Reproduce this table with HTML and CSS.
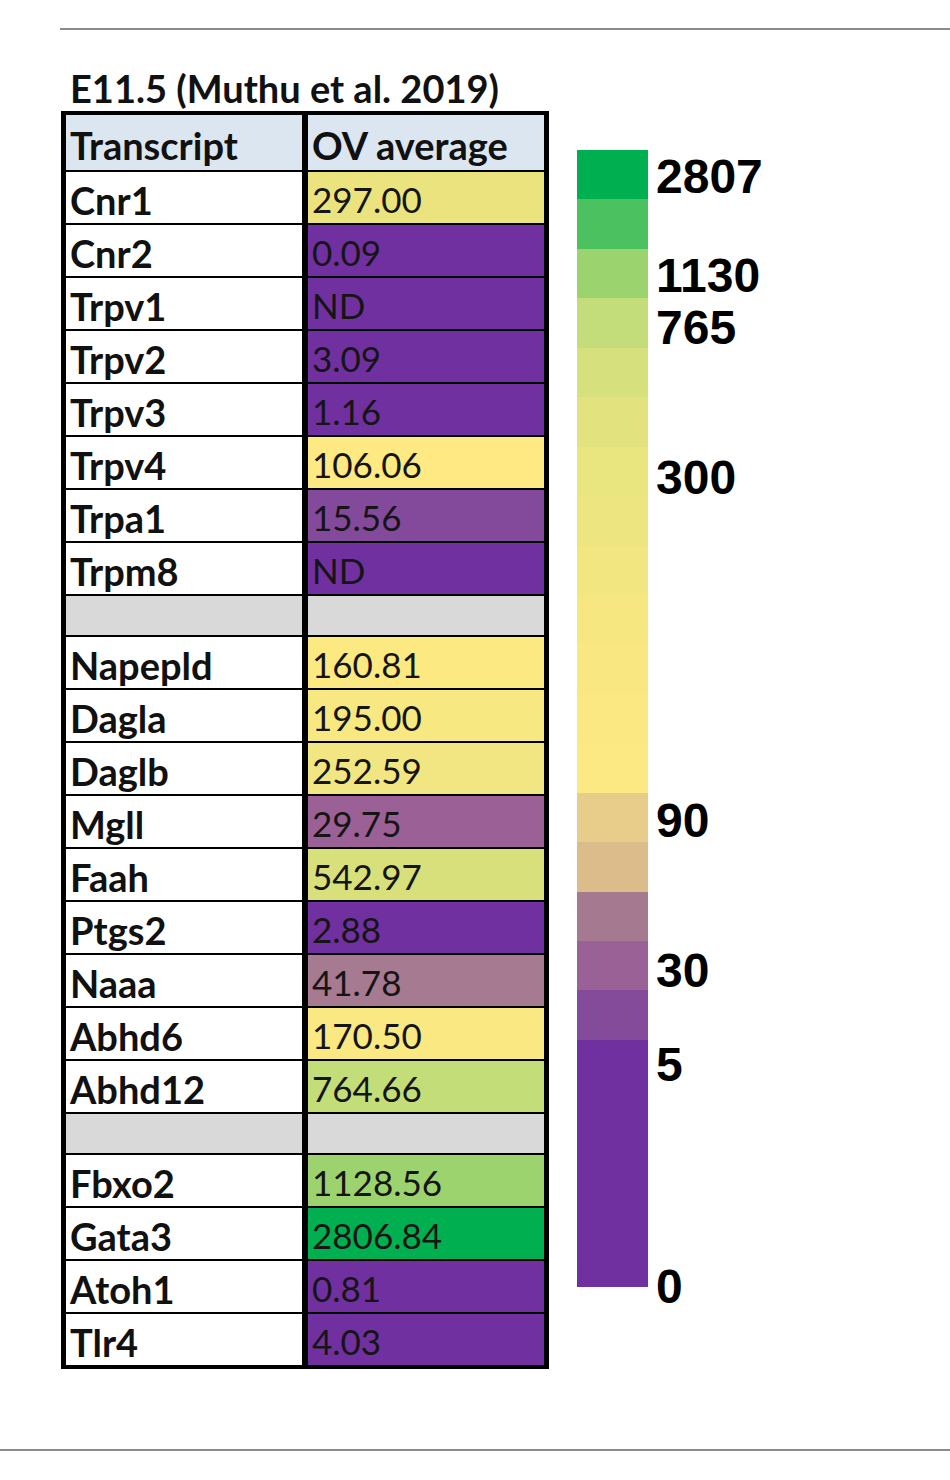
FILE: index.html
```html
<!DOCTYPE html>
<html lang="en">
<head>
<meta charset="utf-8">
<title>E11.5 (Muthu et al. 2019)</title>
<link rel="stylesheet" href="styles.css">
</head>
<body>
<div class="page">
  <div class="rule rule-top"></div>
  <div class="figure">
    <div class="table-block">
      <div class="title">E11.5 (Muthu et al. 2019)</div>
      <div class="grid">
        <div class="cell head">Transcript</div><div class="cell head">OV average</div>
        <div class="cell label">Cnr1</div><div class="cell val" style="background:#ebe47e">297.00</div>
        <div class="cell label">Cnr2</div><div class="cell val" style="background:#7030a0">0.09</div>
        <div class="cell label">Trpv1</div><div class="cell val" style="background:#7030a0">ND</div>
        <div class="cell label">Trpv2</div><div class="cell val" style="background:#7030a0">3.09</div>
        <div class="cell label">Trpv3</div><div class="cell val" style="background:#7030a0">1.16</div>
        <div class="cell label">Trpv4</div><div class="cell val" style="background:#fee983">106.06</div>
        <div class="cell label">Trpa1</div><div class="cell val" style="background:#834a9c">15.56</div>
        <div class="cell label">Trpm8</div><div class="cell val" style="background:#7030a0">ND</div>
        <div class="cell spacer"></div><div class="cell spacer"></div>
        <div class="cell label">Napepld</div><div class="cell val" style="background:#fce982">160.81</div>
        <div class="cell label">Dagla</div><div class="cell val" style="background:#f7e882">195.00</div>
        <div class="cell label">Daglb</div><div class="cell val" style="background:#f1e681">252.59</div>
        <div class="cell label">Mgll</div><div class="cell val" style="background:#9b6197">29.75</div>
        <div class="cell label">Faah</div><div class="cell val" style="background:#d8e07c">542.97</div>
        <div class="cell label">Ptgs2</div><div class="cell val" style="background:#7030a0">2.88</div>
        <div class="cell label">Naaa</div><div class="cell val" style="background:#a67a90">41.78</div>
        <div class="cell label">Abhd6</div><div class="cell val" style="background:#fae882">170.50</div>
        <div class="cell label">Abhd12</div><div class="cell val" style="background:#c3dd79">764.66</div>
        <div class="cell spacer"></div><div class="cell spacer"></div>
        <div class="cell label">Fbxo2</div><div class="cell val" style="background:#9cd36f">1128.56</div>
        <div class="cell label">Gata3</div><div class="cell val" style="background:#00b050">2806.84</div>
        <div class="cell label">Atoh1</div><div class="cell val" style="background:#7030a0">0.81</div>
        <div class="cell label">Tlr4</div><div class="cell val" style="background:#7030a0">4.03</div>
      </div>
    </div>
    <div class="legend">
      <div class="bar">
        <div class="seg" style="background:#00b050"></div>
        <div class="seg" style="background:#4cc160"></div>
        <div class="seg" style="background:#9bd46f"></div>
        <div class="seg" style="background:#c2dd7a"></div>
        <div class="seg" style="background:#d6e07c"></div>
        <div class="seg" style="background:#e2e37f"></div>
        <div class="seg" style="background:#e9e57f"></div>
        <div class="seg" style="background:#ede580"></div>
        <div class="seg" style="background:#f2e681"></div>
        <div class="seg" style="background:#f6e781"></div>
        <div class="seg" style="background:#f9e882"></div>
        <div class="seg" style="background:#fbe882"></div>
        <div class="seg" style="background:#fde983"></div>
        <div class="seg" style="background:#e8cc8a"></div>
        <div class="seg" style="background:#dbbc8a"></div>
        <div class="seg" style="background:#a57a91"></div>
        <div class="seg" style="background:#9a6196"></div>
        <div class="seg" style="background:#844b9b"></div>
        <div class="seg" style="background:#7030a0"></div>
        <div class="seg" style="background:#7030a0"></div>
        <div class="seg" style="background:#7030a0"></div>
        <div class="seg" style="background:#7030a0"></div>
        <div class="seg" style="background:#7030a0"></div>
      </div>
      <div class="tick" style="top:3px">2807</div>
      <div class="tick" style="top:102px">1130</div>
      <div class="tick" style="top:154px">765</div>
      <div class="tick" style="top:304px">300</div>
      <div class="tick" style="top:647px">90</div>
      <div class="tick" style="top:797px">30</div>
      <div class="tick" style="top:891px">5</div>
      <div class="tick" style="top:1113px">0</div>
    </div>
  </div>
  <div class="rule rule-bottom"></div>
</div>
</body>
</html>
```

FILE: styles.css
```css
* { box-sizing: border-box; }
html, body { margin: 0; padding: 0; background: #ffffff; }
body { font-family: "Lato", "Liberation Sans", sans-serif; color: #111; }
.page { width: 950px; height: 1480px; padding-top: 28px; }
.rule { height: 2px; background: #8a8a8a; }
.rule-top { margin-left: 60px; }
.rule-bottom { margin-top: 80px; }
.figure { display: flex; align-items: flex-start; margin-top: 36px; }
.table-block { margin-left: 61px; }
.title {
  font-weight: 700; font-size: 38px; line-height: 45px; height: 45px;
  padding-left: 9px; color: #111; white-space: nowrap;
}
.grid {
  display: grid;
  grid-template-columns: 236px 236px;
  grid-template-rows: 55px repeat(8, 51px) 39px repeat(9, 51px) 39px repeat(4, 51px);
  column-gap: 6px; row-gap: 2px;
  padding: 4px 5px;
  background: #000;
}
.cell {
  font-size: 35px; line-height: 1; padding: 0 4px;
  display: flex; align-items: center; padding-top: 4px;
  white-space: nowrap;
}
.head { background: #dce6f1; font-weight: 700; font-size: 38px; }
.label { background: #fff; font-weight: 700; font-size: 38px; }
.val { font-weight: 400; color: #151515; }
.spacer { background: #d9d9d9; }
.legend { position: relative; margin-left: 28px; margin-top: 84px; width: 300px; height: 1137px; }
.bar { display: flex; flex-direction: column; width: 71px; height: 1137px; }
.seg { flex: 1; }
.tick {
  position: absolute; left: 79px;
  font-family: "Liberation Sans", Arial, sans-serif; font-weight: 700;
  font-size: 48px; line-height: 48px; color: #000;
}
```
